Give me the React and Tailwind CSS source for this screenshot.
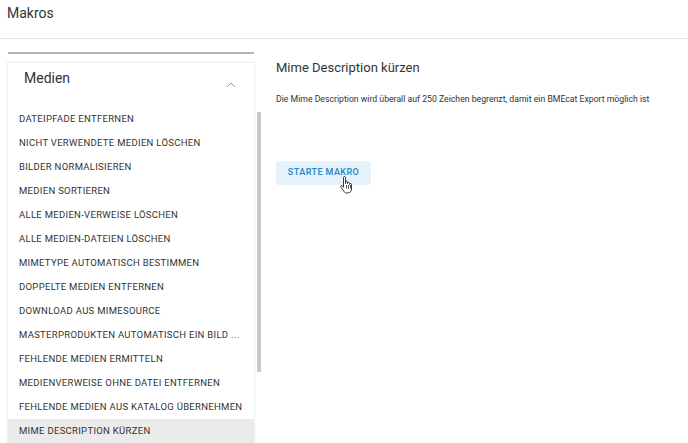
import React from "react";

const items = [
  "Dateipfade entfernen",
  "Nicht verwendete Medien löschen",
  "Bilder normalisieren",
  "Medien sortieren",
  "Alle Medien-Verweise löschen",
  "Alle Medien-Dateien löschen",
  "Mimetype automatisch bestimmen",
  "Doppelte Medien entfernen",
  "Download aus Mimesource",
  "Masterprodukten automatisch ein Bild ...",
  "Fehlende Medien ermitteln",
  "Medienverweise ohne Datei entfernen",
  "Fehlende Medien aus Katalog übernehmen",
  "Mime Description kürzen",
];

const HandCursor = () => (
  <svg width="14" height="18" viewBox="0 0 14 18" className="absolute left-[340px] top-[176px]">
    <path
      d="M3.5 1.5c0-.6.5-1 1-1s1 .4 1 1v6V6c0-.6.5-1 1-1s1 .4 1 1v1.5c0-.6.5-1 1-1s1 .4 1 1v1c0-.6.5-1 1-1s1 .4 1 1V13c0 2.2-1.6 4-3.8 4H7c-1.4 0-2.4-.6-3.2-1.7L1 11.2c-.4-.5-.3-1.1.2-1.4.5-.3 1-.2 1.4.2l.9 1.2V1.5z"
      fill="#fff"
      stroke="#222"
      strokeWidth="0.9"
      strokeLinejoin="round"
    />
    <path d="M6.5 9v3.5M8.5 9v3.5M10.5 9v3.5" stroke="#222" strokeWidth="0.8" />
  </svg>
);

const App = () => {
  return (
    <div className="relative w-[688px] h-[443px] overflow-hidden bg-white font-['Roboto',sans-serif] text-[#333]">
      <div className="h-[39px] border-b border-[#e6e6e6] px-[7px] pt-[3px]">
        <h1 className="text-[14px] leading-[20px] text-[#333]">Makros</h1>
      </div>
      <div className="flex">
        <div className="flex w-[262px] shrink-0">
          <div className="w-[255px] pl-[7px]">
            <div className="mt-[13px] ml-[1px] mr-[1px] h-[2px] bg-[#b4b4b4]" />
            <div className="mt-[8px] border border-[#f0f0f0] shadow-[0_0_2px_rgba(0,0,0,0.06)]">
              <div className="flex items-start justify-between h-[44px] pt-[6px] pl-[16px] pr-[18px]">
                <span className="text-[14px] leading-[18px] text-[#333]">Medien</span>
                <svg width="10" height="6" viewBox="0 0 10 6" className="mt-[13px]">
                  <path d="M1 5l4-4 4 4" fill="none" stroke="#999" strokeWidth="1" />
                </svg>
              </div>
              <ul>
                {items.map((item, i) => (
                  <li
                    key={item}
                    className={`flex items-center h-[24px] pl-[11px] pr-[8px] text-[9.5px] uppercase tracking-[0.3px] whitespace-nowrap text-[#333] ${
                      i === items.length - 1 ? "bg-[#ebebeb]" : ""
                    }`}
                  >
                    {item}
                  </li>
                ))}
              </ul>
            </div>
          </div>
          <div className="ml-[2px] mt-[73px] w-[4px] h-[260px] bg-[#c9c9c9]" />
        </div>
        <div className="pl-[14px] pt-[21px]">
          <h2 className="text-[13px] leading-[16px] text-[#333]">Mime Description kürzen</h2>
          <p className="mt-[17px] text-[8.7px] leading-[12px] text-[#333]">
            Die Mime Description wird überall auf 250 Zeichen begrenzt, damit ein BMEcat Export möglich ist
          </p>
          <button className="mt-[56px] h-[24px] w-[95px] rounded-[3px] bg-[#e6f2fa] text-[9px] font-semibold tracking-[0.4px] text-[#2b8ccb]">
            STARTE MAKRO
          </button>
        </div>
      </div>
      <HandCursor />
    </div>
  );
};

export default App;
